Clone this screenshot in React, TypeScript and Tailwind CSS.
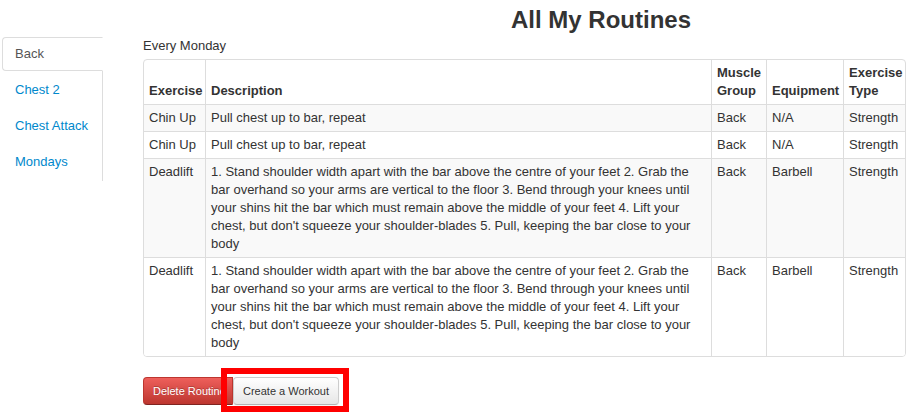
import React from "react";

const rows = [
  { ex: "Chin Up", desc: "Pull chest up to bar, repeat", group: "Back", eq: "N/A", type: "Strength" },
  { ex: "Chin Up", desc: "Pull chest up to bar, repeat", group: "Back", eq: "N/A", type: "Strength" },
  {
    ex: "Deadlift",
    desc: "1. Stand shoulder width apart with the bar above the centre of your feet 2. Grab the bar overhand so your arms are vertical to the floor 3. Bend through your knees until your shins hit the bar which must remain above the middle of your feet 4. Lift your chest, but don't squeeze your shoulder-blades 5. Pull, keeping the bar close to your body",
    group: "Back",
    eq: "Barbell",
    type: "Strength",
  },
  {
    ex: "Deadlift",
    desc: "1. Stand shoulder width apart with the bar above the centre of your feet 2. Grab the bar overhand so your arms are vertical to the floor 3. Bend through your knees until your shins hit the bar which must remain above the middle of your feet 4. Lift your chest, but don't squeeze your shoulder-blades 5. Pull, keeping the bar close to your body",
    group: "Back",
    eq: "Barbell",
    type: "Strength",
  },
];

const tabs = ["Back", "Chest 2", "Chest Attack", "Mondays"];

export default function App() {
  return (
    <div className="relative w-[912px] h-[417px] overflow-hidden bg-white font-['Liberation_Sans',Arial,sans-serif] text-[13px] leading-[18px] text-[#333]">
      <h2 className="h-[37px] pt-[2px] pl-[511px] text-[24px] font-bold leading-[36px] text-[#333]">All My Routines</h2>
      <div className="flex items-start">
        <ul className="ml-[2px] w-[101px] border-r border-[#ddd]">
          {tabs.map((t, i) => (
            <li key={t} className="mb-[2px]">
              <a
                className={
                  i === 0
                    ? "block -mr-px rounded-l-[4px] border border-[#ddd] border-r-transparent bg-white px-[12px] py-[7px] text-[#555]"
                    : "block -mr-px border border-transparent px-[12px] py-[7px] text-[#0088cc]"
                }
              >
                {t}
              </a>
            </li>
          ))}
        </ul>
        <div className="ml-[40px] w-[763px]">
          <p className="mb-[4px]">Every Monday</p>
          <div className="overflow-hidden rounded-[4px] border border-[#ddd]">
            <table className="w-full table-fixed border-separate border-spacing-0">
              <colgroup>
                <col className="w-[61px]" />
                <col className="w-[506px]" />
                <col className="w-[55px]" />
                <col className="w-[77px]" />
                <col className="w-[62px]" />
              </colgroup>
              <thead>
                <tr>
                  <th className="px-[5px] py-[4px] text-left align-bottom font-bold whitespace-nowrap">Exercise</th>
                  <th className="border-l border-[#ddd] px-[5px] py-[4px] text-left align-bottom font-bold">Description</th>
                  <th className="border-l border-[#ddd] px-[5px] py-[4px] text-left align-bottom font-bold">Muscle Group</th>
                  <th className="border-l border-[#ddd] px-[5px] py-[4px] text-left align-bottom font-bold">Equipment</th>
                  <th className="border-l border-[#ddd] px-[5px] py-[4px] text-left align-bottom font-bold">Exercise Type</th>
                </tr>
              </thead>
              <tbody>
                {rows.map((r, i) => (
                  <tr key={i} className={i % 2 === 0 ? "bg-[#f9f9f9]" : "bg-white"}>
                    <td className="border-t border-[#ddd] px-[5px] py-[4px] align-top whitespace-nowrap">{r.ex}</td>
                    <td className="border-t border-l border-[#ddd] px-[5px] py-[4px] align-top">{r.desc}</td>
                    <td className="border-t border-l border-[#ddd] px-[5px] py-[4px] align-top">{r.group}</td>
                    <td className="border-t border-l border-[#ddd] px-[5px] py-[4px] align-top">{r.eq}</td>
                    <td className="border-t border-l border-[#ddd] px-[5px] py-[4px] align-top">{r.type}</td>
                  </tr>
                ))}
              </tbody>
            </table>
          </div>
          <div className="mt-[20px] flex">
            <button className="w-[90px] overflow-hidden whitespace-nowrap rounded-l-[4px] border border-[#bd362f] border-b-[#802420] bg-gradient-to-b from-[#ee5f5b] to-[#bd362f] px-[9px] py-[5px] text-left text-[11px] leading-[16px] text-white [text-shadow:0_-1px_0_rgba(0,0,0,0.25)]">
              Delete Routine
            </button>
            <button className="rounded-[4px] border border-[#ccc] border-b-[#b3b3b3] bg-gradient-to-b from-white to-[#e6e6e6] px-[9px] py-[5px] text-[11px] leading-[16px] text-[#333] shadow-[0_1px_2px_rgba(0,0,0,0.05)]">
              Create a Workout
            </button>
          </div>
        </div>
      </div>
      <div className="absolute left-[221px] top-[368px] h-[44px] w-[128px] border-[6px] border-[#ff0000]" />
    </div>
  );
}
